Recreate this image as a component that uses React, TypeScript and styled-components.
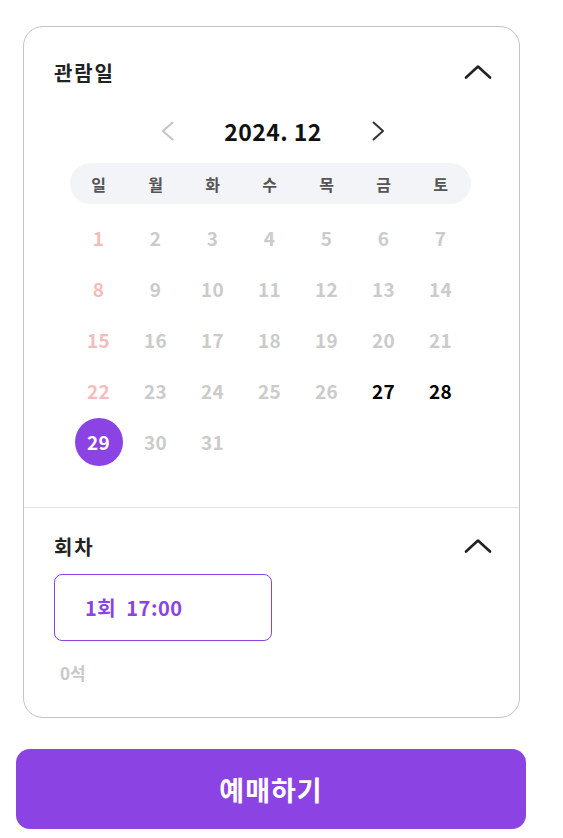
import React from 'react';
import styled, { createGlobalStyle } from 'styled-components';

const PURPLE = '#8c43e3';

const Global = createGlobalStyle`
  body {
    margin: 0;
    background: #fff;
    font-family: "Noto Sans CJK KR", "Noto Sans", sans-serif;
  }
`;

const Page = styled.div`
  width: 510px;
  padding: 26px 0 0 16px;
  display: flex;
  flex-direction: column;
`;

const Card = styled.div`
  margin: 0 6px 0 7px;
  border: 1px solid #c4c4c4;
  border-radius: 20px;
  display: flex;
  flex-direction: column;
`;

const Section = styled.section<{ $top: number; $bottom: number; $divider?: boolean }>`
  padding: ${(p) => p.$top}px 27px ${(p) => p.$bottom}px 30px;
  border-top: ${(p) => (p.$divider ? '1px solid #e2e2e2' : 'none')};
  display: flex;
  flex-direction: column;
`;

const Header = styled.div`
  height: 34px;
  display: flex;
  align-items: center;
  justify-content: space-between;
`;

const Title = styled.h2`
  margin: 0;
  font-size: 20px;
  font-weight: 700;
  color: #222;
  letter-spacing: 1.8px;
`;

const MonthNav = styled.div`
  margin-top: 27px;
  height: 30px;
  display: flex;
  align-items: center;
  justify-content: center;
  gap: 50px;
`;

const Month = styled.span`
  font-size: 23px;
  font-weight: 700;
  color: #111;
  letter-spacing: 0.4px;
`;

const NavButton = styled.button`
  border: none;
  background: none;
  padding: 0;
  display: flex;
  align-items: center;
`;

const WeekBar = styled.div`
  margin: 17px 0 0 16px;
  width: 401px;
  height: 41px;
  border-radius: 21px;
  background: #f3f4f8;
  display: grid;
  grid-template-columns: repeat(7, 57px);
  align-items: center;
`;

const WeekDay = styled.span`
  text-align: center;
  font-size: 16px;
  font-weight: 600;
  color: #555;
`;

const Grid = styled.div`
  margin: 8px 0 0 16px;
  display: grid;
  grid-template-columns: repeat(7, 57px);
  grid-auto-rows: 51px;
`;

const Day = styled.div<{ $tone: 'sun' | 'off' | 'on' | 'sel' }>`
  display: flex;
  align-items: center;
  justify-content: center;
  font-size: 19px;
  font-weight: 700;
  letter-spacing: 0.4px;
  color: ${(p) =>
    p.$tone === 'sun' ? '#f4bcbc' : p.$tone === 'off' ? '#cbcbcb' : p.$tone === 'sel' ? '#fff' : '#000'};
  span {
    width: 48px;
    height: 48px;
    border-radius: 50%;
    display: flex;
    align-items: center;
    justify-content: center;
    background: ${(p) => (p.$tone === 'sel' ? PURPLE : 'transparent')};
  }
`;

const Slot = styled.button`
  margin-top: 11px;
  width: 218px;
  height: 67px;
  border: 1px solid ${PURPLE};
  border-radius: 8px;
  background: #fff;
  padding: 0 0 0 30px;
  text-align: left;
  font-family: inherit;
  font-size: 20px;
  font-weight: 700;
  letter-spacing: 0.5px;
  color: ${PURPLE};
  white-space: pre;
`;

const Seats = styled.span`
  margin: 19px 0 0 6px;
  font-size: 17px;
  font-weight: 700;
  color: #c8c8c8;
`;

const Reserve = styled.button`
  margin-top: 31px;
  height: 80px;
  border: none;
  border-radius: 14px;
  background: ${PURPLE};
  color: #fff;
  font-family: inherit;
  font-size: 27px;
  font-weight: 700;
  letter-spacing: 1px;
`;

const ChevronUp = () => (
  <svg width="28" height="16" viewBox="0 0 28 16" fill="none">
    <path d="M2 13.5 L14 2.5 L26 13.5" stroke="#222" strokeWidth="2.6" strokeLinecap="round" strokeLinejoin="round" />
  </svg>
);

const Arrow = ({ dir, color }: { dir: 'l' | 'r'; color: string }) => (
  <svg width="13" height="20" viewBox="0 0 13 20" fill="none">
    <path
      d={dir === 'l' ? 'M11.5 1.5 L2 10 L11.5 18.5' : 'M1.5 1.5 L11 10 L1.5 18.5'}
      stroke={color}
      strokeWidth="2"
      strokeLinecap="round"
      strokeLinejoin="round"
    />
  </svg>
);

const weekdays = ['일', '월', '화', '수', '목', '금', '토'];
const days = Array.from({ length: 31 }, (_, i) => i + 1);

const toneOf = (d: number): 'sun' | 'off' | 'on' | 'sel' => {
  if (d === 29) return 'sel';
  if (d === 27 || d === 28) return 'on';
  if ((d - 1) % 7 === 0) return 'sun';
  return 'off';
};

export default function App() {
  return (
    <>
      <Global />
      <Page>
        <Card>
          <Section $top={28} $bottom={40}>
            <Header>
              <Title>관람일</Title>
              <ChevronUp />
            </Header>
            <MonthNav>
              <NavButton>
                <Arrow dir="l" color="#c4c4c4" />
              </NavButton>
              <Month>2024. 12</Month>
              <NavButton>
                <Arrow dir="r" color="#333" />
              </NavButton>
            </MonthNav>
            <WeekBar>
              {weekdays.map((w) => (
                <WeekDay key={w}>{w}</WeekDay>
              ))}
            </WeekBar>
            <Grid>
              {days.map((d) => (
                <Day key={d} $tone={toneOf(d)}>
                  <span>{d}</span>
                </Day>
              ))}
            </Grid>
          </Section>
          <Section $top={21} $bottom={32} $divider>
            <Header>
              <Title>회차</Title>
              <ChevronUp />
            </Header>
            <Slot>{'1회  17:00'}</Slot>
            <Seats>0석</Seats>
          </Section>
        </Card>
        <Reserve>예매하기</Reserve>
      </Page>
    </>
  );
}
